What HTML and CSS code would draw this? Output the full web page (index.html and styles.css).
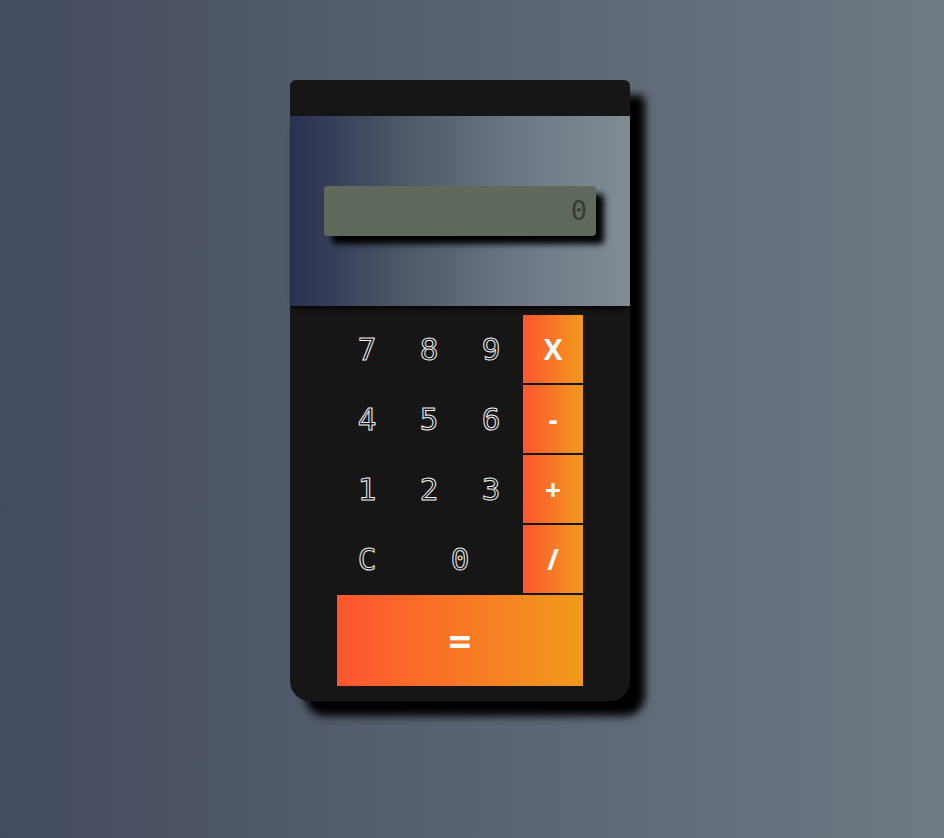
FILE: index.html
```html
<!DOCTYPE html>
<html>
<head>
<meta charset="utf-8">
<link rel="stylesheet" href="styles.css">
</head>
<body>
<div class="calc">
  <div class="topbar"></div>
  <div class="screen-area">
    <div class="screen">0</div>
  </div>
  <div class="keys">
    <button class="key num">7</button>
    <button class="key num">8</button>
    <button class="key num">9</button>
    <button class="key op">X</button>
    <button class="key num">4</button>
    <button class="key num">5</button>
    <button class="key num">6</button>
    <button class="key op">-</button>
    <button class="key num">1</button>
    <button class="key num">2</button>
    <button class="key num">3</button>
    <button class="key op">+</button>
    <button class="key num">C</button>
    <button class="key num wide">0</button>
    <button class="key op">/</button>
    <button class="key op eq">=</button>
  </div>
</div>
</body>
</html>
```
FILE: styles.css
```css
html, body {
  margin: 0;
  height: 100%;
}
body {
  background: linear-gradient(to right, #434b5e, #6f7a84);
  display: flex;
  justify-content: center;
  align-items: flex-start;
  font-family: "DejaVu Sans Mono", monospace;
}
.calc {
  margin: 80px 24px 0 0;
  width: 340px;
  background: #161616;
  border-radius: 6px 6px 20px 20px;
  box-shadow: 15px 15px 8px #000;
  padding-bottom: 15px;
}
.topbar {
  height: 36px;
}
.screen-area {
  height: 190px;
  background: linear-gradient(to right, #283050, #4a5566 30%, #6a7682 65%, #808d95);
  display: flex;
  align-items: center;
  justify-content: center;
  box-shadow: 0 5px 6px -3px #000;
  position: relative;
}
.screen {
  width: 272px;
  height: 50px;
  box-sizing: border-box;
  background: #5f6a5c;
  border-radius: 4px;
  box-shadow: 8px 8px 6px #000;
  text-align: right;
  padding-right: 9px;
  font-family: "DejaVu Sans Mono", monospace;
  font-size: 27px;
  line-height: 50px;
  color: #343b34;
}
.keys {
  margin: 9px auto 0;
  width: 246px;
  display: grid;
  grid-template-columns: repeat(4, 60px);
  grid-template-rows: repeat(4, 68px) 91px;
  gap: 2px;
}
.key {
  border: 0;
  padding: 0;
  margin: 0;
  background: transparent;
  display: flex;
  align-items: center;
  justify-content: center;
}
.num {
  font-family: "DejaVu Sans Mono", monospace;
  font-size: 31px;
  color: transparent;
  -webkit-text-stroke: 1px #f0f0f0;
}
.wide {
  grid-column: span 2;
}
.op {
  background: linear-gradient(to right, #ff5530, #f09a1c);
  color: #fff;
  font-family: "Open Sans", sans-serif;
  font-weight: 700;
  font-size: 28px;
}
.eq {
  grid-column: span 4;
  font-size: 40px;
}
```
